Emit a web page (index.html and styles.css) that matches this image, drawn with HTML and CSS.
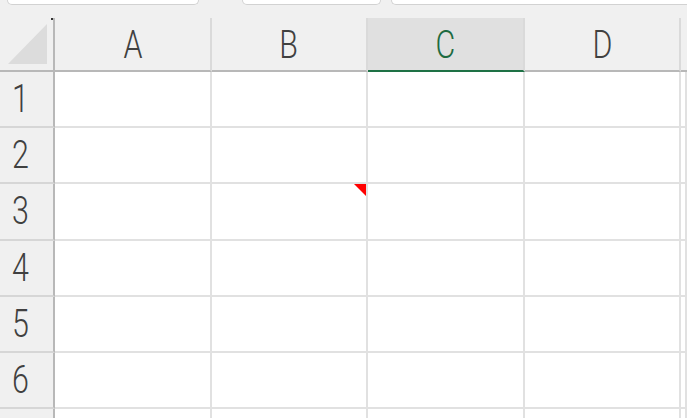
FILE: index.html
```html
<!DOCTYPE html>
<html lang="ja">
<head>
    <meta charset="UTF-8">
    <title>Sheet1</title>
    <link rel="stylesheet" href="styles.css">
</head>
<body>

    <div class="tabs">
        <div class="tab tab1"></div>
        <div class="tab tab2"></div>
        <div class="tab tab3"></div>
    </div>

    <div class="sheet">
        <div class="corner">
            <svg width="40" height="40" viewBox="0 0 40 40"><polygon points="39,0 39,40 0,40" fill="#dcdcdc"/></svg>
            <span class="dot"></span>
        </div>
        <div class="colhead"><span>A</span></div>
        <div class="colhead"><span>B</span></div>
        <div class="colhead sel"><span>C</span></div>
        <div class="colhead"><span>D</span></div>
        <div class="colhead last"></div>

        <div class="rowhead"><span>1</span></div>
        <div class="cell"></div><div class="cell"></div><div class="cell"></div><div class="cell"></div><div class="cell"></div>

        <div class="rowhead"><span>2</span></div>
        <div class="cell"></div><div class="cell"></div><div class="cell"></div><div class="cell"></div><div class="cell"></div>

        <div class="rowhead"><span>3</span></div>
        <div class="cell"></div><div class="cell note"><span class="flag"></span></div><div class="cell"></div><div class="cell"></div><div class="cell"></div>

        <div class="rowhead"><span>4</span></div>
        <div class="cell"></div><div class="cell"></div><div class="cell"></div><div class="cell"></div><div class="cell"></div>

        <div class="rowhead"><span>5</span></div>
        <div class="cell"></div><div class="cell"></div><div class="cell"></div><div class="cell"></div><div class="cell"></div>

        <div class="rowhead"><span>6</span></div>
        <div class="cell"></div><div class="cell"></div><div class="cell"></div><div class="cell"></div><div class="cell"></div>

        <!-- row 7 only peeks in at the bottom edge -->
        <div class="rowhead"></div>
        <div class="cell"></div><div class="cell"></div><div class="cell"></div><div class="cell"></div><div class="cell"></div>
    </div>

</body>
</html>
```

FILE: styles.css
```css
*{
    box-sizing: border-box;
}
body{
    margin: 0;
    width: 687px;
    height: 418px;
    overflow: hidden;
    background: #fff;
    font-family: Roboto, "Liberation Sans", sans-serif;
}

/* strip with the ribbon / tab bottoms */
.tabs{
    height: 18px;
    background: #f0f0f0;
    display: flex;
    align-items: flex-start;
}
.tab{
    height: 5px;
    background: #fff;
    border: 1px solid #d2d2d2;
    border-top: none;
    border-radius: 0 0 8px 8px;
}
.tab1{
    margin-left: 7px;
    width: 192px;
}
.tab2{
    margin-left: 43px;
    width: 139px;
}
.tab3{
    margin-left: 10px;
    flex: 1;
    border-right: none;
    border-radius: 0 0 0 8px;
}

.sheet{
    display: grid;
    grid-template-columns: 55px 157px 156px 157px 156px 1fr;
    grid-template-rows: 54px repeat(7, 56.2px);
}

.corner{
    position: relative;
    background: #f0f0f0;
    border-right: 2px solid #b8b8b8;
    border-bottom: 2px solid #b8b8b8;
    display: flex;
    align-items: flex-end;
    justify-content: flex-end;
    padding: 0 5px 6px 0;
}
.corner svg{
    display: block;
}
.dot{
    position: absolute;
    right: 0;
    top: 0;
    width: 2px;
    height: 2px;
    background: #333;
}

.colhead,
.rowhead{
    background: #f0f0f0;
    display: flex;
    align-items: center;
    justify-content: center;
    font-size: 38px;
    font-weight: 300;
    line-height: 1;
    color: #404040;
}
.colhead span,
.rowhead span{
    display: inline-block;
    transform: scaleX(0.8);
}

.colhead{
    border-right: 2px solid #dadada;
    border-bottom: 2px solid #b8b8b8;
    padding-top: 2px;
}
.colhead.sel{
    background: #e0e0e0;
    color: #1e6b41;
    border-bottom: 2px solid #1e7145;
}
.colhead.last{
    border-right: none;
}

.rowhead{
    border-right: 2px solid #b8b8b8;
    border-bottom: 2px solid #d6d6d6;
    padding-right: 12px;
}

.cell{
    border-right: 2px solid #e1e1e1;
    border-bottom: 2px solid #e1e1e1;
}
.cell.note{
    position: relative;
}
.flag{
    position: absolute;
    top: 0;
    right: 0;
    width: 0;
    height: 0;
    border-top: 12px solid #ff0000;
    border-left: 12px solid transparent;
}
```
